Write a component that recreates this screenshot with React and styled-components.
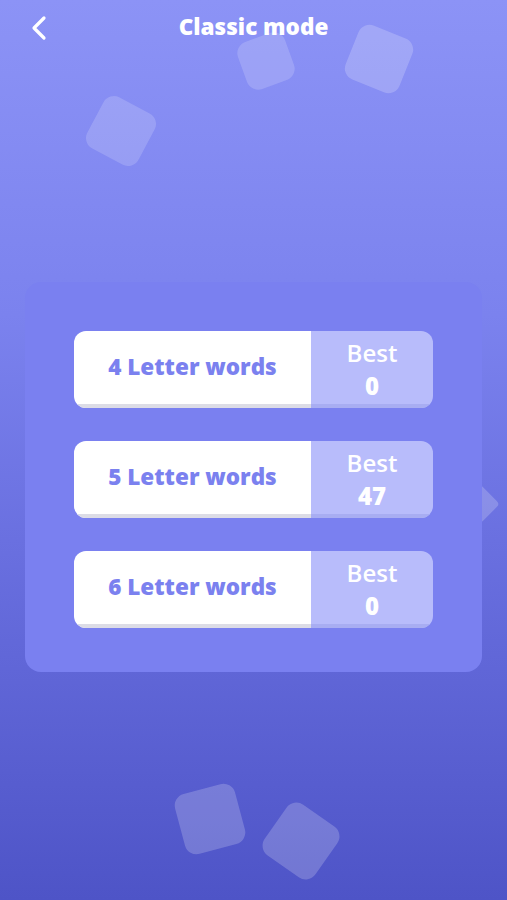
import React from 'react';
import styled, { createGlobalStyle } from 'styled-components';

const GlobalStyle = createGlobalStyle`
  html, body { margin: 0; padding: 0; }
  body { font-family: "Open Sans", Lato, sans-serif; }
`;

const Screen = styled.div`
  position: relative;
  width: 507px;
  height: 900px;
  overflow: hidden;
  background: linear-gradient(180deg, #8c93f6 0%, #7b82ee 35%, #6a70e0 60%, #4e54c7 100%);
  display: flex;
  flex-direction: column;
`;

const Header = styled.header`
  position: relative;
  z-index: 2;
  height: 56px;
  display: flex;
  align-items: center;
  justify-content: center;
`;

const BackButton = styled.button`
  position: absolute;
  left: 26px;
  top: 14px;
  background: none;
  border: 0;
  padding: 0;
  width: 26px;
  height: 28px;
  cursor: pointer;
`;

const Title = styled.h1`
  margin: 0;
  margin-top: -3px;
  color: #fff;
  font-size: 22.5px;
  font-weight: 800;
`;

const Tile = styled.div`
  position: absolute;
  z-index: ${p => p.$z || 1};
  border-radius: ${p => p.$r || 12}px;
  background: rgba(255, 255, 255, ${p => p.$a || 0.18});
`;

const Content = styled.main`
  position: relative;
  z-index: 2;
  flex: 1;
  display: flex;
  justify-content: center;
  padding-top: 226px;
`;

const Panel = styled.section`
  width: 457px;
  height: 390px;
  box-sizing: border-box;
  border-radius: 16px;
  background: #7a80f0;
  display: flex;
  flex-direction: column;
  align-items: center;
  gap: 33px;
  padding-top: 49px;
`;

const Row = styled.button`
  width: 359px;
  height: 77px;
  border: 0;
  padding: 0;
  border-radius: 12px;
  overflow: hidden;
  display: flex;
  cursor: pointer;
  font-family: inherit;
  background: transparent;
`;

const Label = styled.div`
  width: 237px;
  background: #fff;
  box-shadow: inset 0 -4px 0 #dcdce6;
  display: flex;
  align-items: center;
  justify-content: center;
  padding-bottom: 6px;
  box-sizing: border-box;
  color: #7b81ef;
  font-size: 22.5px;
  font-weight: 800;
`;

const Score = styled.div`
  flex: 1;
  background: #b8bcfb;
  box-shadow: inset 0 -4px 0 #a8adf2;
  display: flex;
  flex-direction: column;
  align-items: center;
  justify-content: center;
  padding-bottom: 2px;
  box-sizing: border-box;
  color: #fff;
  font-size: 24px;
  font-weight: 600;
  line-height: 33px;
`;

const ScoreValue = styled.span`
  font-weight: 800;
`;

const modes = [
  { letters: 4, best: 0 },
  { letters: 5, best: 47 },
  { letters: 6, best: 0 },
];

export default function App() {
  return (
    <Screen>
      <GlobalStyle />
      <Tile $a={0.17} style={{ left: 241, top: 36, width: 50, height: 50, transform: 'rotate(-20deg)' }} />
      <Tile $a={0.2} style={{ left: 350, top: 30, width: 58, height: 58, transform: 'rotate(22deg)' }} />
      <Tile $a={0.17} style={{ left: 92, top: 102, width: 58, height: 58, transform: 'rotate(28deg)' }} />
      <Tile $a={0.2} $r={4} style={{ left: 466, top: 490, width: 28, height: 28, transform: 'rotate(45deg)' }} />
      <Tile $a={0.2} style={{ left: 179, top: 788, width: 62, height: 62, transform: 'rotate(-15deg)' }} />
      <Tile $a={0.2} style={{ left: 270, top: 810, width: 62, height: 62, transform: 'rotate(35deg)' }} />

      <Header>
        <BackButton aria-label="Back">
          <svg width="26" height="28" viewBox="0 0 26 28">
            <path d="M18 4 L8 14 L18 24" fill="none" stroke="#fff" strokeWidth="3.2" strokeLinecap="round" strokeLinejoin="round" />
          </svg>
        </BackButton>
        <Title>Classic mode</Title>
      </Header>

      <Content>
        <Panel>
          {modes.map(m => (
            <Row key={m.letters}>
              <Label>{m.letters} Letter words</Label>
              <Score>
                <span>Best</span>
                <ScoreValue>{m.best}</ScoreValue>
              </Score>
            </Row>
          ))}
        </Panel>
      </Content>
    </Screen>
  );
}
